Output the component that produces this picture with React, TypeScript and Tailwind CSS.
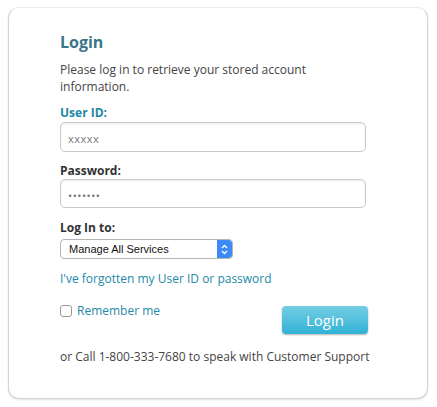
import { useState } from 'react';

function App() {
  const [remember, setRemember] = useState(false);

  return (
    <div className="min-h-screen bg-white pt-[7px] pl-[8px]" style={{ fontFamily: '"Open Sans", sans-serif' }}>
      <div className="w-[420px] h-[392px] rounded-[11px] border border-[#d4d4d4] border-t-[#ececec] shadow-[0_1px_2px_rgba(0,0,0,0.12)] bg-white pl-[51px] pr-[40px] pt-[23px]">
        <h1 className="text-[16px] font-bold text-[#3b7588] leading-[22px]">Login</h1>
        <p className="mt-[8px] w-[270px] text-[12px] leading-[17px] text-[#444]">
          Please log in to retrieve your stored account information.
        </p>

        <label className="block mt-[9px] text-[12px] font-bold leading-[17px] text-[#1b88a6]">User ID:</label>
        <div className="mt-px h-[30px] w-[306px] rounded-[5px] border border-[#c9c9c9] shadow-[inset_0_1px_2px_rgba(0,0,0,0.08)] flex items-end pl-[7px] pb-[4px] text-[11px] text-[#777] tracking-[0.5px]">
          xxxxx
        </div>

        <label className="block mt-[10px] text-[12px] font-bold leading-[17px] text-[#333]">Password:</label>
        <div className="h-[29px] w-[306px] rounded-[5px] border border-[#c9c9c9] shadow-[inset_0_1px_2px_rgba(0,0,0,0.08)] flex items-end pl-[7px] pb-[5px] text-[11px] text-[#777] tracking-[0.5px] leading-[12px]">
          •••••••
        </div>

        <label className="block mt-[11px] text-[12px] font-bold leading-[17px] text-[#333]">Log In to:</label>
        <div className="mt-[3px] h-[20px] w-[173px] rounded-[4px] border border-[#b4b4b4] flex items-center overflow-hidden bg-white">
          <span className="flex-1 pl-[8px] text-[11px] text-[#111]" style={{ fontFamily: '"Liberation Sans", Arial, sans-serif' }}>
            Manage All Services
          </span>
          <span className="h-full w-[15px] bg-[#3b8af5] rounded-r-[3px] flex items-center justify-center">
            <svg width="7" height="11" viewBox="0 0 7 11" fill="none" stroke="white" strokeWidth="1.3">
              <path d="M1 4 L3.5 1.5 L6 4" />
              <path d="M1 7 L3.5 9.5 L6 7" />
            </svg>
          </span>
        </div>

        <a href="#" className="block mt-[11px] text-[12px] leading-[17px] text-[#2489a8]">
          I've forgotten my User ID or password
        </a>

        <div className="mt-[16px] flex items-start justify-between w-[308px]">
          <label className="flex items-center gap-[5px] text-[12px] text-[#2489a8] leading-[16px]">
            <input
              type="checkbox"
              checked={remember}
              onChange={e => setRemember(e.target.checked)}
              className="appearance-none w-[12px] h-[12px] rounded-[3px] border border-[#999] bg-white"
            />
            Remember me
          </label>
          <button className="mt-[3px] w-[86px] h-[28px] rounded-[4px] bg-gradient-to-b from-[#72cde4] to-[#2db2d6] text-white text-[15px] shadow-[0_1px_2px_rgba(0,0,0,0.3)]">
            Login
          </button>
        </div>

        <p className="mt-[14px] whitespace-nowrap text-[12px] leading-[17px] text-[#444]">
          or Call 1-800-333-7680 to speak with Customer Support
        </p>
      </div>
    </div>
  );
}

export default App;
